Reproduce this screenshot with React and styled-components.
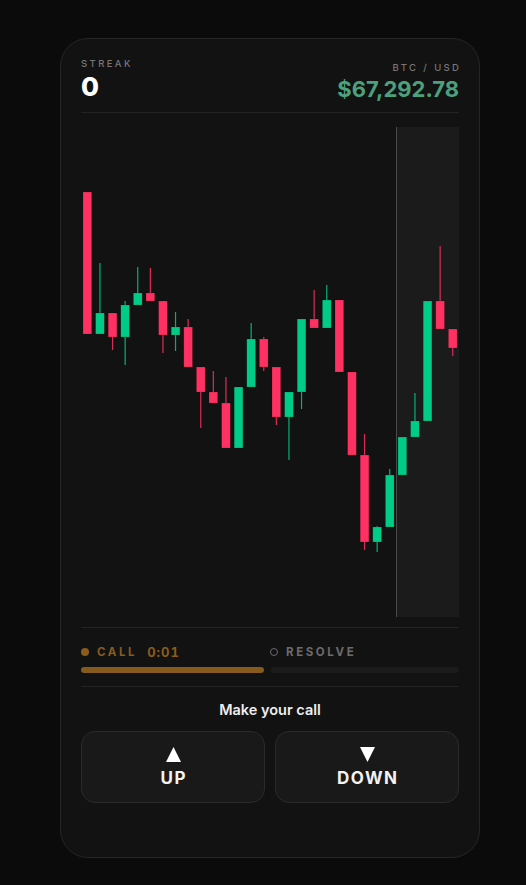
import React from 'react'
import styled, { createGlobalStyle } from 'styled-components'

const GlobalStyle = createGlobalStyle`
  html, body {
    margin: 0;
    padding: 0;
    background: #0b0b0b;
  }
  body {
    font-family: Inter, "Noto Sans", sans-serif;
    -webkit-font-smoothing: antialiased;
  }
`

const UP = '#00cc88'
const DOWN = '#ff3162'

// [bodyTop, bodyBottom, wickTop, wickBottom, up]
const candles = [
  [192, 334, 192, 334, false],
  [313, 334, 263, 334, true],
  [313, 337, 313, 350, false],
  [305, 337, 301, 365, true],
  [293, 305, 267, 305, true],
  [293, 301, 268, 301, false],
  [301, 335, 301, 353, false],
  [327, 335, 312, 351, true],
  [327, 367, 319, 367, false],
  [367, 392, 367, 428, false],
  [392, 403, 371, 403, false],
  [403, 448, 377, 448, false],
  [387, 448, 387, 448, true],
  [339, 387, 323, 387, true],
  [339, 367, 337, 371, false],
  [367, 417, 367, 425, false],
  [392, 417, 392, 460, true],
  [319, 392, 319, 409, true],
  [319, 328, 290, 328, false],
  [300, 328, 285, 328, true],
  [300, 372, 300, 372, false],
  [372, 455, 372, 455, false],
  [455, 542, 434, 550, false],
  [527, 542, 526, 552, true],
  [475, 527, 469, 527, true],
  [437, 475, 437, 475, true],
  [421, 437, 393, 437, true],
  [301, 421, 301, 421, true],
  [301, 329, 246, 329, false],
  [329, 348, 329, 356, false],
]

const CHART_W = 378
const CHART_H = 490
const ORIGIN_X = 81
const ORIGIN_Y = 127
const STEP = 12.6
const BODY_W = 8.7

const Chart = () => (
  <ChartSvg width={CHART_W} height={CHART_H} viewBox={`0 0 ${CHART_W} ${CHART_H}`}>
    <rect x={315} y={0} width={63} height={CHART_H} fill="#1b1b1b" />
    <line x1={315.5} y1={0} x2={315.5} y2={CHART_H} stroke="#4a4a4a" strokeWidth={1} />
    {candles.map(([bt, bb, wt, wb, up], i) => {
      const x = 83 - ORIGIN_X + STEP * i
      const color = up ? UP : DOWN
      return (
        <g key={i}>
          <rect
            x={x + BODY_W / 2 - 0.6}
            y={wt - ORIGIN_Y}
            width={1.2}
            height={wb - wt}
            fill={color}
            opacity={0.85}
          />
          <rect
            x={x}
            y={bt - ORIGIN_Y}
            width={BODY_W}
            height={bb - bt}
            fill={color}
            stroke="rgba(0,0,0,0.25)"
            strokeWidth={0.6}
          />
        </g>
      )
    })}
  </ChartSvg>
)

const Triangle = ({ down }) => (
  <TriangleSvg width="15" height="15" viewBox="0 0 15 15">
    {down ? <polygon points="0,0 15,0 7.5,15" fill="#fff" /> : <polygon points="7.5,0 15,15 0,15" fill="#fff" />}
  </TriangleSvg>
)

const App = () => {
  return (
    <Page>
      <GlobalStyle />
      <Card>
        <Header>
          <Stat>
            <Label>Streak</Label>
            <StreakValue>0</StreakValue>
          </Stat>
          <Stat $right>
            <Label>BTC / USD</Label>
            <Price>$67,292.78</Price>
          </Stat>
        </Header>

        <ChartWrap>
          <Chart />
        </ChartWrap>

        <Phases>
          <PhaseRow>
            <Phase>
              <Dot $active />
              <PhaseName $active>Call</PhaseName>
              <Timer>0:01</Timer>
            </Phase>
            <Phase>
              <Dot />
              <PhaseName>Resolve</PhaseName>
            </Phase>
          </PhaseRow>
          <Progress>
            <Fill style={{ width: '48.4%' }} />
            <Track />
          </Progress>
        </Phases>

        <Prompt>Make your call</Prompt>
        <Buttons>
          <CallButton>
            <Triangle />
            <ButtonText>UP</ButtonText>
          </CallButton>
          <CallButton>
            <Triangle down />
            <ButtonText>DOWN</ButtonText>
          </CallButton>
        </Buttons>
      </Card>
    </Page>
  )
}

const Page = styled.div`
  min-height: 885px;
  padding: 38px 46px 0 60px;
  box-sizing: border-box;
`

const Card = styled.div`
  width: 420px;
  box-sizing: border-box;
  background: #121212;
  border: 1px solid #262626;
  border-radius: 28px;
  padding: 19px 20px 54px;
`

const Header = styled.div`
  display: flex;
  justify-content: space-between;
  align-items: flex-end;
  padding-bottom: 12px;
  border-bottom: 1px solid #232323;
`

const Stat = styled.div`
  display: flex;
  flex-direction: column;
  align-items: ${(p) => (p.$right ? 'flex-end' : 'flex-start')};
  gap: 4px;
`

const Label = styled.div`
  font-size: 9.5px;
  line-height: 12px;
  font-weight: 500;
  letter-spacing: 2.4px;
  text-transform: uppercase;
  color: #777;
  margin-right: -2.4px;
`

const StreakValue = styled.div`
  font-size: 26px;
  line-height: 1;
  font-weight: 800;
  color: #fff;
`

const Price = styled.div`
  font-size: 22px;
  line-height: 1;
  font-weight: 700;
  color: #4ca07d;
`

const ChartWrap = styled.div`
  padding: 14px 0 10px;
  border-bottom: 1px solid #232323;
`

const ChartSvg = styled.svg`
  display: block;
`

const Phases = styled.div`
  padding: 16px 0 13px;
  border-bottom: 1px solid #232323;
`

const PhaseRow = styled.div`
  display: grid;
  grid-template-columns: 1fr 1fr;
  height: 14px;
  align-items: center;
`

const Phase = styled.div`
  display: flex;
  align-items: center;
`

const Dot = styled.span`
  width: 8px;
  height: 8px;
  box-sizing: border-box;
  border-radius: 50%;
  margin-right: 8px;
  background: ${(p) => (p.$active ? '#8a5b1c' : 'transparent')};
  border: ${(p) => (p.$active ? 'none' : '1.5px solid #6b6b6b')};
`

const PhaseName = styled.span`
  font-size: 11.5px;
  font-weight: 700;
  letter-spacing: 2.6px;
  text-transform: uppercase;
  color: ${(p) => (p.$active ? '#8a5b1c' : '#6b6b6b')};
`

const Timer = styled.span`
  margin-left: 10px;
  font-size: 13px;
  font-weight: 700;
  letter-spacing: 1px;
  color: #8a5b1c;
  font-variant-numeric: tabular-nums;
`

const Progress = styled.div`
  display: flex;
  gap: 7px;
  margin-top: 9px;
  height: 6px;
`

const Fill = styled.div`
  background: #86591c;
  border-radius: 3px;
`

const Track = styled.div`
  flex: 1;
  background: #1b1b1b;
  border-radius: 3px;
`

const Prompt = styled.div`
  margin-top: 14px;
  text-align: center;
  font-size: 14.5px;
  line-height: 17px;
  font-weight: 600;
  color: #eee;
`

const Buttons = styled.div`
  display: grid;
  grid-template-columns: 1fr 1fr;
  gap: 10px;
  margin-top: 13px;
`

const CallButton = styled.button`
  height: 72px;
  display: flex;
  flex-direction: column;
  align-items: center;
  justify-content: center;
  gap: 8px;
  background: #191919;
  border: 1px solid #2a2a2a;
  border-radius: 14px;
  padding: 0;
  cursor: pointer;
`

const TriangleSvg = styled.svg`
  display: block;
`

const ButtonText = styled.span`
  font-family: Inter, sans-serif;
  font-size: 17px;
  line-height: 1;
  font-weight: 700;
  letter-spacing: 1.5px;
  margin-right: -1.5px;
  color: #f2f2f2;
`

export default App
